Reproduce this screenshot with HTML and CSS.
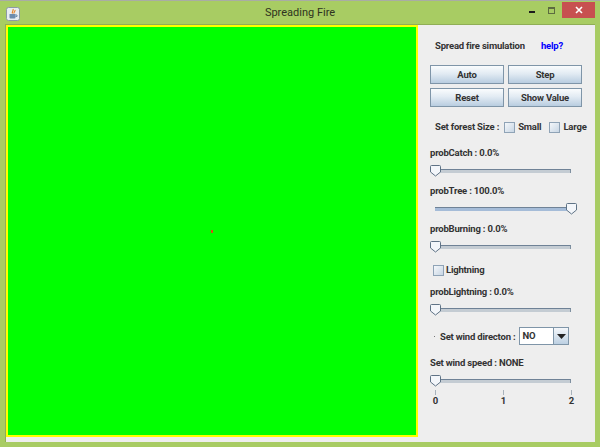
FILE: index.html
```html
<!DOCTYPE html>
<html lang="en">
<head>
    <meta charset="UTF-8">
    <title>Spreading Fire</title>
    <link rel="stylesheet" href="styles.css">
</head>
<body>
    <div class="window">
        <div class="titlebar">
            <svg class="appIcon" width="14" height="14" viewBox="0 0 14 14">
                <rect x="0.5" y="0.5" width="13" height="13" rx="2" fill="#e8edf2" stroke="#8d9aa6"/>
                <path d="M7 2c1 1.500-1.500 2.500-.5 4.500M9 3c.5 1.500-1.500 2-1 3.500" fill="none" stroke="#e8862a" stroke-width="1.200"/>
                <path d="M3.500 7h6v3.500a1 1 0 0 1-1 1h-4a1 1 0 0 1-1-1z" fill="#6d8cad"/>
                <path d="M9.500 8h1.500v1.500h-1.500" fill="none" stroke="#6d8cad"/>
            </svg>
            <div class="title">Spreading Fire</div>
            <div class="winControls">
                <div class="minBtn"></div>
                <div class="maxBtn"></div>
                <div class="closeBtn">
                    <svg width="8" height="8" viewBox="0 0 8 8"><path d="M1 1l6 6M7 1l-6 6" stroke="#fff" stroke-width="1.600"/></svg>
                </div>
            </div>
        </div>
        <div class="content">
            <div class="forest">
                <div class="spark"></div>
            </div>
            <div class="panel">
                <div class="headRow">
                    <span>Spread fire simulation</span>
                    <span class="help">help?</span>
                </div>
                <div class="buttons">
                    <button class="btn">Auto</button>
                    <button class="btn">Step</button>
                    <button class="btn">Reset</button>
                    <button class="btn">Show Value</button>
                </div>
                <div class="sizeRow">
                    <span>Set forest Size :</span>
                    <label class="check"><i class="box"></i>Small</label>
                    <label class="check"><i class="box"></i>Large</label>
                </div>

                <div class="label catchLabel">probCatch : 0.0%</div>
                <div class="slider">
                    <div class="track"></div>
                    <svg class="thumb" width="12" height="12" viewBox="0 0 12 12"><path d="M1.500.5h8a1 1 0 0 1 1 1v5.500l-5 4-5-4v-5.500a1 1 0 0 1 1-1z" fill="#f3f6fa" stroke="#5f7386"/></svg>
                </div>

                <div class="label">probTree : 100.0%</div>
                <div class="slider full">
                    <div class="track"></div>
                    <svg class="thumb" width="12" height="12" viewBox="0 0 12 12"><path d="M1.500.5h8a1 1 0 0 1 1 1v5.500l-5 4-5-4v-5.500a1 1 0 0 1 1-1z" fill="#f3f6fa" stroke="#5f7386"/></svg>
                </div>

                <div class="label">probBurning : 0.0%</div>
                <div class="slider">
                    <div class="track"></div>
                    <svg class="thumb" width="12" height="12" viewBox="0 0 12 12"><path d="M1.500.5h8a1 1 0 0 1 1 1v5.500l-5 4-5-4v-5.500a1 1 0 0 1 1-1z" fill="#f3f6fa" stroke="#5f7386"/></svg>
                </div>

                <label class="check lightning"><i class="box"></i>Lightning</label>

                <div class="label lightningLabel">probLightning : 0.0%</div>
                <div class="slider">
                    <div class="track"></div>
                    <svg class="thumb" width="12" height="12" viewBox="0 0 12 12"><path d="M1.500.5h8a1 1 0 0 1 1 1v5.500l-5 4-5-4v-5.500a1 1 0 0 1 1-1z" fill="#f3f6fa" stroke="#5f7386"/></svg>
                </div>

                <div class="windRow">
                    <span class="dot"></span>
                    <span>Set wind directon :</span>
                    <div class="combo">
                        <span class="comboValue">NO</span>
                        <span class="comboArrow"><svg width="9" height="5" viewBox="0 0 9 5"><path d="M0 0h9L4.500 5z" fill="#222"/></svg></span>
                    </div>
                </div>

                <div class="label speedLabel">Set wind speed : NONE</div>
                <div class="slider">
                    <div class="track"></div>
                    <svg class="thumb" width="12" height="12" viewBox="0 0 12 12"><path d="M1.500.5h8a1 1 0 0 1 1 1v5.500l-5 4-5-4v-5.500a1 1 0 0 1 1-1z" fill="#f3f6fa" stroke="#5f7386"/></svg>
                </div>
                <div class="ticks">
                    <div class="tick"><i></i>0</div>
                    <div class="tick"><i></i>1</div>
                    <div class="tick"><i></i>2</div>
                </div>
            </div>
        </div>
    </div>
</body>
</html>
```

FILE: styles.css
```css
html, body {
    margin: 0;
    padding: 0;
}

body {
    width: 600px;
    height: 447px;
    overflow: hidden;
    font-family: Roboto, "Liberation Sans", sans-serif;
}

.window {
    height: 447px;
    box-sizing: border-box;
    background-color: #a8cc63;
    border-top: 1px solid #a9aca4;
    display: flex;
    flex-direction: column;
}

.titlebar {
    height: 23px;
    display: flex;
    align-items: flex-start;
    position: relative;
}

.appIcon {
    margin: 6px 0 0 6px;
}

.title {
    position: absolute;
    left: 0;
    right: 0;
    top: 4px;
    text-align: center;
    font-size: 11px;
    line-height: 16px;
    color: #2e3320;
}

.winControls {
    margin-left: auto;
    margin-right: 5px;
    display: flex;
    align-items: flex-start;
}

.minBtn {
    width: 6px;
    height: 2px;
    margin: 10px 13px 0 0;
    background-color: #1c1c1c;
}

.maxBtn {
    width: 5px;
    height: 4px;
    margin: 6px 7px 0 0;
    border: 1px solid #5c6b40;
    border-top-width: 2px;
}

.closeBtn {
    width: 33px;
    height: 16px;
    margin-top: 1px;
    background-color: #c75050;
    display: flex;
    align-items: center;
    justify-content: center;
}

.content {
    margin: 0 5px;
    height: 418px;
    background-color: #eeeeee;
    border-top: 1px solid #8fae55;
    border-left: 1px solid #8fae55;
    box-sizing: border-box;
    display: flex;
}

.forest {
    width: 408px;
    height: 408px;
    background-color: #00ff00;
    border: 2px solid #ffff00;
    position: relative;
    flex: none;
}

.spark {
    position: absolute;
    left: 203px;
    top: 203px;
    width: 2px;
    height: 3px;
    background-color: #d0501a;
}

.panel {
    flex: 1;
    padding-left: 12px;
    font-size: 9.500px;
    letter-spacing: -0.200px;
    font-weight: bold;
    color: #333333;
    display: flex;
    flex-direction: column;
}

.headRow {
    height: 13px;
    line-height: 13px;
    margin: 14px 0 0 5px;
    display: flex;
    gap: 16px;
}

.help {
    color: #0000ff;
}

.buttons {
    margin-top: 13px;
    width: 152px;
    display: grid;
    grid-template-columns: 74px 74px;
    grid-auto-rows: 19px;
    gap: 4px;
}

.btn {
    padding: 0;
    font: inherit;
    letter-spacing: inherit;
    color: #333333;
    border: 1px solid #7f95a8;
    background: linear-gradient(#fafcfd, #e2ebf3 45%, #b9cde0);
}

.sizeRow {
    height: 14px;
    line-height: 14px;
    margin: 13px 0 0 5px;
    display: flex;
    align-items: center;
    white-space: nowrap;
}

.check {
    display: flex;
    align-items: center;
    gap: 3px;
    margin-left: 5px;
}

.check + .check {
    margin-left: 8px;
}

.box {
    width: 9px;
    height: 9px;
    border: 1px solid #8fa3b6;
    background: linear-gradient(135deg, #f4f7fa, #c8d6e4);
}

.label {
    height: 12px;
    line-height: 12px;
    margin-top: 7px;
}

.catchLabel {
    margin-top: 13px;
}

.slider {
    position: relative;
    height: 13px;
    width: 141px;
    margin-top: 6px;
}

.track {
    position: absolute;
    left: 5px;
    right: 0;
    top: 4px;
    height: 4px;
    background-color: #c4ccd3;
    border-top: 1px solid #6f8296;
    border-right: 1px solid #7f90a0;
    box-sizing: border-box;
}

.thumb {
    position: absolute;
    left: 0;
    top: 0;
}

.slider.full .track {
    background-color: #a5bcd8;
}

.slider.full .thumb {
    left: 136px;
}

.lightning {
    margin: 10px 0 0 3px;
    height: 12px;
    line-height: 12px;
    gap: 2px;
}

.lightningLabel {
    margin-top: 10px;
}

.windRow {
    height: 20px;
    margin-top: 9px;
    display: flex;
    align-items: center;
    padding-left: 4px;
}

.dot {
    width: 1px;
    height: 1px;
    margin-right: 5px;
    background-color: #777777;
}

.combo {
    width: 48px;
    height: 16px;
    margin-left: 4px;
    border: 1px solid #7f95a8;
    background-color: #ffffff;
    display: flex;
}

.comboValue {
    flex: 1;
    line-height: 16px;
    padding-left: 2px;
}

.comboArrow {
    width: 14px;
    border-left: 1px solid #7f95a8;
    background: linear-gradient(#f4f7fa, #bcd0e2);
    display: flex;
    align-items: center;
    justify-content: center;
}

.speedLabel {
    margin-top: 11px;
}

.ticks {
    width: 147px;
    margin-top: 2px;
    display: flex;
    justify-content: space-between;
}

.tick {
    width: 11px;
    text-align: center;
    line-height: 12px;
}

.tick i {
    display: block;
    width: 1px;
    height: 5px;
    margin: 0 auto;
    background-color: #a8b2bb;
}
```
